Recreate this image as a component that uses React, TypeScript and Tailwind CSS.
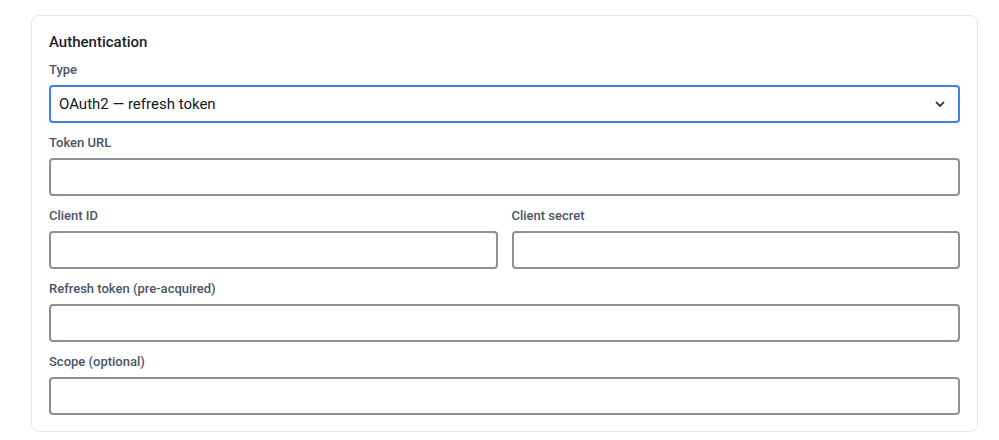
import React from 'react';

const inputCls =
  'block w-full h-[38px] rounded-[4px] border-2 border-[#8e9097] bg-white px-2 text-[15px] text-[#111827] outline-none';

const Field: React.FC<{ label: string; children?: React.ReactNode }> = ({ label, children }) => (
  <div className="flex flex-col">
    <label className="mb-[6px] text-[13px] leading-[18px] font-medium text-[#4a5568]">{label}</label>
    {children ?? <input type="text" className={inputCls} />}
  </div>
);

const App: React.FC = () => {
  return (
    <div className="min-h-[440px] bg-white pt-[15px] pl-[31px] font-['Roboto','Liberation_Sans',sans-serif]">
      <div className="w-[947px] rounded-[8px] border border-[#e5e7eb] bg-white px-[17px] pt-[15px] pb-[16px]">
        <h2 className="text-[15px] leading-[22px] font-medium text-[#1f2328] mb-[8px]">Authentication</h2>
        <div className="flex flex-col gap-[11px]">
          <Field label="Type">
            <div className="flex h-[38px] items-center justify-between rounded-[4px] border-2 border-[#3b82f6] bg-white pl-[8px] pr-[12px]">
              <span className="text-[15px] text-[#111827]">OAuth2 — refresh token</span>
              <svg width="12" height="12" viewBox="0 0 12 12" fill="none">
                <path d="M2.5 4.5 6 8l3.5-3.5" stroke="#374151" strokeWidth="1.8" strokeLinecap="round" strokeLinejoin="round" />
              </svg>
            </div>
          </Field>
          <Field label="Token URL" />
          <div className="grid grid-cols-2 gap-[14px]">
            <Field label="Client ID" />
            <Field label="Client secret" />
          </div>
          <Field label="Refresh token (pre-acquired)" />
          <Field label="Scope (optional)" />
        </div>
      </div>
    </div>
  );
};

export default App;
